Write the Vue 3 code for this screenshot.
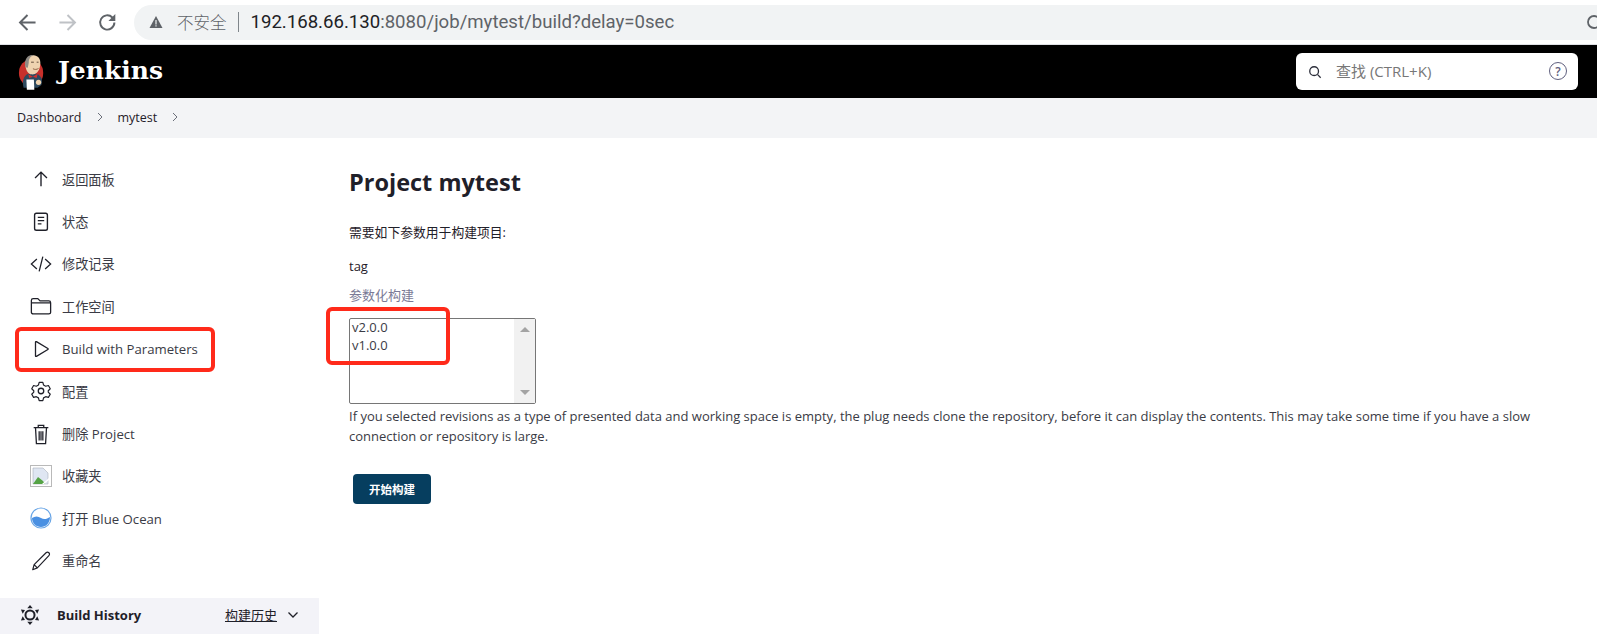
<script setup>
const navItems = [
  { icon: 'up', label: '返回面板' },
  { icon: 'doc', label: '状态' },
  { icon: 'code', label: '修改记录' },
  { icon: 'folder', label: '工作空间' },
  { icon: 'play', label: 'Build with Parameters' },
  { icon: 'gear', label: '配置' },
  { icon: 'trash', label: '删除 Project' },
  { icon: 'broken', label: '收藏夹' },
  { icon: 'ocean', label: '打开 Blue Ocean' },
  { icon: 'pencil', label: '重命名' }
]
</script>

<template>
  <div class="page">
    <div class="toolbar">
      <svg class="tb-icon" viewBox="0 0 20 20"><path d="M17 10H4M10 3.500 3.500 10l6.500 6.500" fill="none" stroke="#5f6368" stroke-width="1.700" /></svg>
      <svg class="tb-icon" viewBox="0 0 20 20"><path d="M3 10h13M10 3.500l6.500 6.500-6.500 6.500" fill="none" stroke="#bfc2c6" stroke-width="1.700" /></svg>
      <svg class="tb-icon" viewBox="0 0 20 20"><path d="M16 10a6.200 6.200 0 1 1-1.800-4.400L16 7.400" fill="none" stroke="#5f6368" stroke-width="1.700" /><path d="M16.800 2.600v6h-6z" fill="#5f6368" /></svg>
      <div class="omnibox">
        <svg class="warn" viewBox="0 0 14 14"><path d="M7 1 13.500 13H.5z" fill="#5f6368" /><path d="M6.400 5h1.200v4.500H6.400zM6.400 10.300h1.200v1.200H6.400z" fill="#f1f3f4" /></svg>
        <span class="insecure">不安全</span>
        <span class="sep"></span>
        <span class="url"><b>192.168.66.130</b>:8080/job/mytest/build?delay=0sec</span>
        <span class="spacer"></span>
        <svg class="clip-icon" viewBox="0 0 12 20"><circle cx="9" cy="10" r="6" fill="none" stroke="#5f6368" stroke-width="1.800" /></svg>
      </div>
    </div>

    <header class="header">
      <svg class="logo" viewBox="0 0 30 40">
        <ellipse cx="14" cy="21" rx="13" ry="14.500" fill="#c8302b" />
        <path d="M6 37c-2-7 0-13 5-15h9c5 2 7 7 5 12l-4 3H10z" fill="#2f4a5e" />
        <path d="M8 14C7 6 12 1.500 17 2c6 .7 8 6 6.500 12-1 6-5 9-9 8.500-4-.5-5.500-4-6.500-8.500z" fill="#efd3b0" />
        <path d="M8 15C6 6 11 1 17 2c-4 1-5.500 4-5.500 8l-1 5.500z" fill="#8f8a84" />
        <path d="M14 9.500h3M20 9.500h2" stroke="#5a4636" stroke-width="1" />
        <path d="M16 16.500c2 1 4 1 6-.3" fill="none" stroke="#8a5a3c" stroke-width="1" />
        <path d="M11 22.500l5 2.500 5-3-1 4.500-4-1.500-4 1.500z" fill="#d4322c" />
        <path d="M9 28h8l.5 11H9.500z" fill="#fff" />
        <circle cx="22" cy="31" r="2.800" fill="#efd3b0" />
      </svg>
      <span class="brand">Jenkins</span>
      <span class="spacer"></span>
      <div class="search">
        <svg class="search-icon" viewBox="0 0 16 16"><circle cx="7" cy="7" r="5" fill="none" stroke="#2b2d3a" stroke-width="1.500" /><path d="m11 11 3.500 3.500" stroke="#2b2d3a" stroke-width="1.500" /></svg>
        <span class="search-text">查找 (CTRL+K)</span>
        <span class="spacer"></span>
        <span class="help">?</span>
      </div>
    </header>

    <nav class="crumbs">
      <span>Dashboard</span>
      <svg class="chev" viewBox="0 0 8 12"><path d="m2 2 4 4-4 4" fill="none" stroke="#6b6f7a" stroke-width="1" /></svg>
      <span>mytest</span>
      <svg class="chev" viewBox="0 0 8 12"><path d="m2 2 4 4-4 4" fill="none" stroke="#6b6f7a" stroke-width="1" /></svg>
    </nav>

    <div class="main">
      <aside class="sidebar">
        <ul class="tasks">
          <li v-for="item in navItems" :key="item.label" class="task">
            <span class="task-icon">
              <svg v-if="item.icon === 'up'" viewBox="0 0 24 24"><path d="M12 20V5M5.500 11 12 4.500 18.500 11" fill="none" stroke="#1f2029" stroke-width="1.500" /></svg>
              <svg v-else-if="item.icon === 'doc'" viewBox="0 0 24 24"><rect x="5" y="2.500" width="14" height="18.500" rx="2" fill="none" stroke="#1f2029" stroke-width="1.500" /><path d="M8.500 7h7M8.500 10.500h7M8.500 14h4" stroke="#1f2029" stroke-width="1.400" /></svg>
              <svg v-else-if="item.icon === 'code'" viewBox="0 0 24 24"><path d="M7.500 6.500 1.500 12l6 5.500M16.500 6.500l6 5.500-6 5.500M14 4l-4 16" fill="none" stroke="#1f2029" stroke-width="1.400" /></svg>
              <svg v-else-if="item.icon === 'folder'" viewBox="0 0 24 24"><path d="M1.500 6c0-1 .7-2 2-2h5l2.500 2.500h9.500c1.200 0 2 .7 2 2V19c0 1-.8 1.500-2 1.500h-17c-1.200 0-2-.7-2-1.500zM1.500 8.500h21" fill="none" stroke="#1f2029" stroke-width="1.400" /></svg>
              <svg v-else-if="item.icon === 'play'" viewBox="0 0 24 24"><path d="M6 4.500v15c0 .5.500.8 1 .5l12.500-7.500c.5-.3.5-.7 0-1L7 4c-.5-.3-1 0-1 .5z" fill="none" stroke="#1f2029" stroke-width="1.400" /></svg>
              <svg v-else-if="item.icon === 'gear'" viewBox="0 0 24 24"><path d="M10 2.500h4l.8 3 2.300 1.300 3-.8 2 3.500-2.200 2.200v1.600l2.200 2.200-2 3.500-3-.8-2.300 1.300-.8 3h-4l-.8-3-2.300-1.300-3 .8-2-3.500 2.200-2.200v-1.600L1.900 9.500l2-3.500 3 .8 2.300-1.300z" fill="none" stroke="#1f2029" stroke-width="1.300" stroke-linejoin="round" /><circle cx="12" cy="12" r="3" fill="none" stroke="#1f2029" stroke-width="1.400" /></svg>
              <svg v-else-if="item.icon === 'trash'" viewBox="0 0 24 24"><path d="M4 5h16M9 5V2.500h6V5M6 5l1 17.500h10L18 5M10 9v10M12 9v10M14 9v10" fill="none" stroke="#1f2029" stroke-width="1.400" /></svg>
              <svg v-else-if="item.icon === 'broken'" viewBox="0 0 22 22"><rect x=".5" y=".5" width="21" height="21" fill="#fff" stroke="#b9b9b9" /><path d="M3 3h10l5 5v11H3z" fill="#dfe6f2" stroke="#a9b0bb" stroke-width=".6" /><path d="M3 19l5-7 5 4 2 3z" fill="#55a345" /><path d="m12 19 7-6v2l-5 4z" fill="#fff" /></svg>
              <svg v-else-if="item.icon === 'ocean'" viewBox="0 0 22 22"><circle cx="11" cy="11" r="10" fill="#fff" stroke="#6aa6e6" stroke-width="1.200" /><path d="M2 11c3-2 6-2 9 0s6 1 9-1c0 6-4 10-9 10s-9-4-9-9z" fill="#4a90e2" /></svg>
              <svg v-else viewBox="0 0 24 24"><path d="M3 21.500 4.500 16 17.500 3c1-1 2.300-.8 3.100 0s1 2.100 0 3.100L8 19.500zM4.500 16 8 19.500" fill="none" stroke="#1f2029" stroke-width="1.300" stroke-linejoin="round" /></svg>
            </span>
            <span class="task-label">{{ item.label }}</span>
          </li>
        </ul>
        <div class="history">
          <svg class="sun" viewBox="0 0 22 22"><circle cx="11" cy="11" r="5" fill="none" stroke="#1f2029" stroke-width="2.200" /><path d="M11 0l3 3.500H8zM11 22l-3-3.500h6zM1 5l4.500.5-2.500 4zM21 5l-2 4.500-2.500-4zM1 17l2-4.500 2.500 4zM21 17l-4.500-.5 2.500-4z" fill="#1f2029" /></svg>
          <span class="history-title">Build History</span>
          <span class="spacer"></span>
          <span class="history-link">构建历史</span>
          <svg class="history-chev" viewBox="0 0 12 8"><path d="m1.500 1.500 4.500 4.500 4.500-4.500" fill="none" stroke="#1f2029" stroke-width="1.300" /></svg>
        </div>
      </aside>

      <main class="content">
        <h1>Project mytest</h1>
        <p class="intro">需要如下参数用于构建项目:</p>
        <div class="param-name">tag</div>
        <div class="param-desc">参数化构建</div>
        <div class="listbox">
          <div class="options">
            <div>v2.0.0</div>
            <div>v1.0.0</div>
          </div>
          <div class="scroll">
            <span class="arrow-up"></span>
            <span class="arrow-down"></span>
          </div>
        </div>
        <p class="note">If you selected revisions as a type of presented data and working space is empty, the plug needs clone the repository, before it can display the contents. This may take some time if you have a slow connection or repository is large.</p>
        <button class="build" type="button">开始构建</button>
      </main>
    </div>

    <div class="mark mark-nav"></div>
    <div class="mark mark-list"></div>
  </div>
</template>

<style scoped>
.page {
  position: relative;
  height: 634px;
  overflow: hidden;
  background: #fff;
  color: #1f2029;
  font-family: "Open Sans", "Noto Sans CJK SC", sans-serif;
  font-size: 13px;
}
.spacer {
  flex: 1;
}
.toolbar {
  display: flex;
  align-items: center;
  height: 44px;
  padding-left: 16px;
  border-bottom: 1px solid #dfe1e5;
}
.tb-icon {
  width: 23px;
  height: 23px;
  margin-right: 17px;
}
.omnibox {
  display: flex;
  align-items: center;
  flex: 1;
  height: 35px;
  margin-left: -2px;
  padding-left: 15px;
  border-radius: 18px 0 0 18px;
  background: #f1f3f4;
  font-family: "Roboto", "Noto Sans CJK SC", sans-serif;
  font-size: 16.500px;
  font-weight: 300;
}
.warn {
  width: 14px;
  height: 14px;
  margin-right: 14px;
}
.insecure {
  color: #5f6368;
}
.sep {
  width: 1px;
  height: 20px;
  margin: 0 12px 0 11px;
  background: #80868b;
}
.url {
  color: #5f6368;
  font-size: 18.600px;
  font-weight: 400;
}
.url b {
  color: #202124;
  font-weight: 400;
}
.clip-icon {
  width: 12px;
  height: 20px;
}
.header {
  display: flex;
  align-items: center;
  height: 53px;
  padding: 0 19px 0 18px;
  background: #000;
}
.logo {
  width: 28px;
  height: 38px;
}
.brand {
  margin: -3px 0 0 12px;
  color: #fff;
  font-family: "DejaVu Serif", serif;
  font-size: 25px;
  font-weight: 700;
}
.search {
  display: flex;
  align-items: center;
  width: 282px;
  height: 37px;
  padding: 0 11px 0 12px;
  box-sizing: border-box;
  border-radius: 6px;
  background: #fff;
}
.search-icon {
  width: 14px;
  height: 14px;
}
.search-text {
  margin: -3px 0 0 14px;
  color: #777;
  font-size: 15px;
}
.help {
  display: flex;
  align-items: center;
  justify-content: center;
  width: 16px;
  height: 16px;
  margin-top: -1px;
  border: 1.500px solid #5f5f7e;
  border-radius: 50%;
  color: #5f5f7e;
  font-size: 12px;
  font-weight: 600;
}
.crumbs {
  display: flex;
  align-items: center;
  height: 40px;
  padding: 0 0 2px 17px;
  box-sizing: border-box;
  background: #f3f4f6;
  font-size: 12.500px;
}
.chev {
  width: 8px;
  height: 12px;
  margin: 0 14px;
}
.main {
  display: flex;
}
.sidebar {
  width: 319px;
  flex-shrink: 0;
}
.tasks {
  margin: 0;
  padding: 20px 0 0 30px;
  list-style: none;
}
.task {
  display: flex;
  align-items: center;
  height: 42.400px;
}
.task-icon {
  display: flex;
  width: 22px;
  height: 22px;
  margin-right: 10px;
}
.task-icon svg {
  width: 22px;
  height: 22px;
}
.task-label {
  color: #3a3b45;
  font-size: 13.200px;
}
.history {
  display: flex;
  align-items: center;
  height: 37px;
  margin-top: 16px;
  padding: 0 20px 3px 20px;
  box-sizing: border-box;
  background: #f3f3f8;
}
.sun {
  width: 20px;
  height: 20px;
}
.history-title {
  margin-left: 17px;
  font-weight: 700;
}
.history-link {
  text-decoration: underline;
}
.history-chev {
  width: 12px;
  height: 8px;
  margin-left: 10px;
}
.content {
  flex: 1;
  padding: 26px 40px 0 30px;
}
h1 {
  margin: 0;
  font-size: 23.500px;
  font-weight: 700;
  line-height: 36px;
}
.intro {
  margin: 22px 0 0;
  font-size: 12.800px;
  line-height: 20px;
}
.param-name {
  margin-top: 14px;
  line-height: 20px;
}
.param-desc {
  margin-top: 9px;
  color: #7a7a96;
  font-size: 13px;
  line-height: 20px;
}
.listbox {
  display: flex;
  width: 187px;
  height: 86px;
  margin-top: 13px;
  box-sizing: border-box;
  border: 1px solid #767676;
  border-radius: 2px;
}
.options {
  flex: 1;
  margin-top: -1px;
  padding-left: 2px;
  color: #3a3b45;
  line-height: 18px;
}
.scroll {
  display: flex;
  flex-direction: column;
  justify-content: space-between;
  align-items: center;
  width: 21px;
  padding: 8px 0;
  box-sizing: border-box;
  background: #f1f1f1;
}
.arrow-up,
.arrow-down {
  width: 0;
  height: 0;
  border-left: 5px solid transparent;
  border-right: 5px solid transparent;
}
.arrow-up {
  border-bottom: 5px solid #a3a3a3;
}
.arrow-down {
  border-top: 5px solid #a3a3a3;
}
.note {
  margin: 2px 0 0;
  color: #3a3b45;
  font-size: 13px;
  line-height: 20px;
}
.build {
  display: block;
  width: 78px;
  height: 30px;
  margin: 28px 0 0 4px;
  border: 0;
  border-radius: 4px;
  background: #063e5f;
  color: #fff;
  font-family: inherit;
  font-size: 11.500px;
  font-weight: 700;
}
.mark {
  position: absolute;
  box-sizing: border-box;
  border: 4px solid #ff2a1a;
  border-radius: 6px;
}
.mark-nav {
  left: 15px;
  top: 327px;
  width: 200px;
  height: 45px;
}
.mark-list {
  left: 326px;
  top: 307px;
  width: 124px;
  height: 58px;
}
</style>
